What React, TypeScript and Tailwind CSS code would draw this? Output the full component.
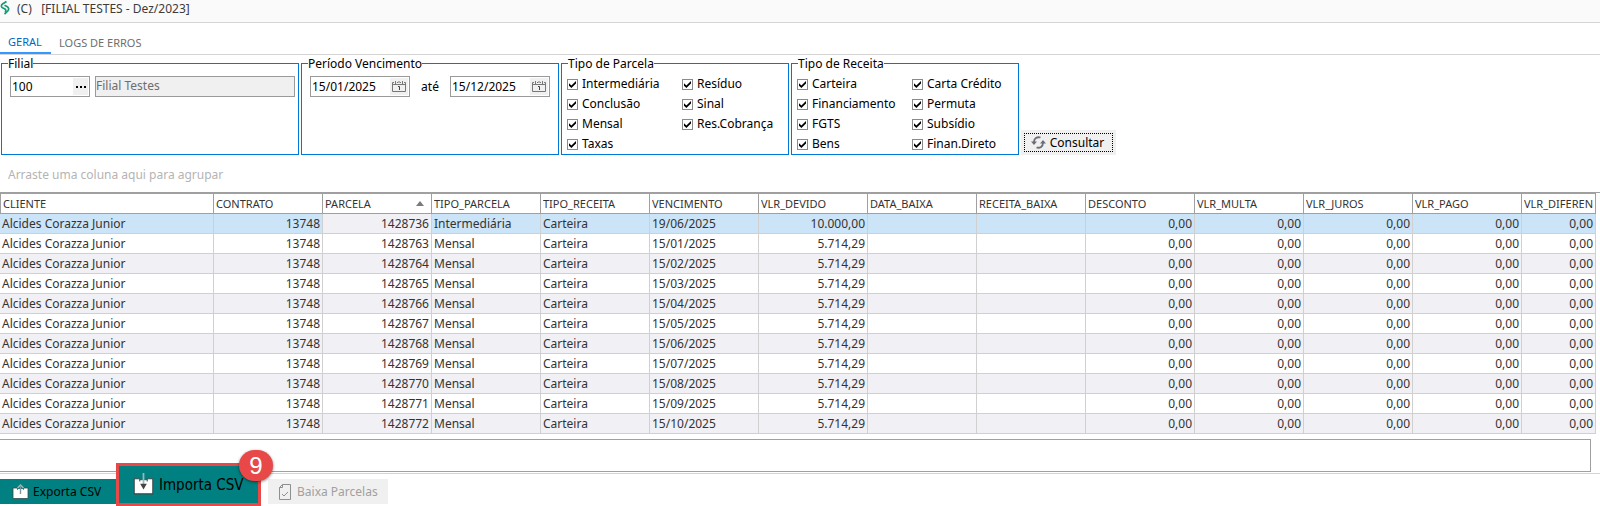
import type { ReactNode } from 'react'

const COLUMNS = [
  { name: 'CLIENTE', width: 'w-[214px]' },
  { name: 'CONTRATO', width: 'w-[109px]', right: true },
  { name: 'PARCELA', width: 'w-[109px]', right: true, sorted: true },
  { name: 'TIPO_PARCELA', width: 'w-[109px]' },
  { name: 'TIPO_RECEITA', width: 'w-[109px]' },
  { name: 'VENCIMENTO', width: 'w-[109px]' },
  { name: 'VLR_DEVIDO', width: 'w-[109px]', right: true },
  { name: 'DATA_BAIXA', width: 'w-[109px]' },
  { name: 'RECEITA_BAIXA', width: 'w-[109px]' },
  { name: 'DESCONTO', width: 'w-[109px]', right: true },
  { name: 'VLR_MULTA', width: 'w-[109px]', right: true },
  { name: 'VLR_JUROS', width: 'w-[109px]', right: true },
  { name: 'VLR_PAGO', width: 'w-[109px]', right: true },
  { name: 'VLR_DIFEREN', width: 'w-auto', right: true },
]

const PARCELAS = [
  ['1428736', 'Intermediária', '19/06/2025', '10.000,00'],
  ['1428763', 'Mensal', '15/01/2025', '5.714,29'],
  ['1428764', 'Mensal', '15/02/2025', '5.714,29'],
  ['1428765', 'Mensal', '15/03/2025', '5.714,29'],
  ['1428766', 'Mensal', '15/04/2025', '5.714,29'],
  ['1428767', 'Mensal', '15/05/2025', '5.714,29'],
  ['1428768', 'Mensal', '15/06/2025', '5.714,29'],
  ['1428769', 'Mensal', '15/07/2025', '5.714,29'],
  ['1428770', 'Mensal', '15/08/2025', '5.714,29'],
  ['1428771', 'Mensal', '15/09/2025', '5.714,29'],
  ['1428772', 'Mensal', '15/10/2025', '5.714,29'],
]

function toCells([parcela, tipo, vencimento, valor]: string[]) {
  return [
    'Alcides Corazza Junior', '13748', parcela, tipo, 'Carteira', vencimento, valor,
    '', '', '0,00', '0,00', '0,00', '0,00', '0,00',
  ]
}

function Group({ title, className, children }: { title: string; className: string; children: ReactNode }) {
  return (
    <fieldset className={`h-[99px] border border-[#0078d7] pl-2 ${className}`}>
      <legend className="-ml-0.5 h-[15px] leading-[15px]">{title}</legend>
      {children}
    </fieldset>
  )
}

function Check({ label }: { label: string }) {
  return (
    <label className="flex h-5 items-center gap-1 whitespace-nowrap">
      <span className="grid size-[11px]">
        <input
          type="checkbox"
          defaultChecked
          className="peer col-start-1 row-start-1 size-[11px] appearance-none border border-[#8a8a8a] bg-white"
        />
        <svg
          viewBox="0 0 11 11"
          className="pointer-events-none invisible col-start-1 row-start-1 size-[11px] peer-checked:visible"
          aria-hidden="true"
        >
          <path d="M2 4.2 4.4 6.6 9 2v2.6L4.4 9 2 6.8z" fill="#000" />
        </svg>
      </span>
      {label}
    </label>
  )
}

function DateField({ label, value }: { label: string; value: string }) {
  return (
    <div className="flex h-[21px] w-[100px] items-center border border-[#9a9a9a] pr-px">
      <input aria-label={label} defaultValue={value} className="w-0 flex-1 pl-px outline-none" />
      <button type="button" aria-label={`Abrir calendário: ${label}`} className="grid h-[17px] w-[18px] place-items-center bg-[#f0f0f0]">
        <svg width="14" height="13" viewBox="0 0 14 13" fill="none" stroke="#777" aria-hidden="true">
          <path d="M2 2.5H.5v9h13v-9H12M5 2.5h1M8 2.5h1M3.5 1v3M7 1v2M10.5 1v3M1 4.5h12" />
          <path d="M6 6.5h1.5v3.5" stroke="#444" />
        </svg>
      </button>
    </div>
  )
}

function BoxIcon({ down, className }: { down?: boolean; className: string }) {
  return (
    <svg viewBox="0 0 17 16" className={className} preserveAspectRatio="none" aria-hidden="true">
      <path d="M1 4h4.5v1.5h6V4H16v10.500H1z" fill="#fff" stroke="#3d4a4a" strokeWidth="0.8" />
      <path d="M5.900 5h5.200v3H5.900z" fill="#fff" />
      {down ? (
        <>
          <path d="M8.500 0v8" stroke="#a5b5b5" strokeWidth="1.4" />
          <path d="M5.800 7.500h5.400L8.500 11.500z" fill="#444" />
        </>
      ) : (
        <>
          <path d="M8.500 2.500V10" stroke="#8a9494" strokeWidth="1.4" />
          <path d="M5.500 4 8.500 1l3 3" fill="none" stroke="#a5b5b5" strokeWidth="1.4" />
        </>
      )}
    </svg>
  )
}

export default function App() {
  return (
    <div className="bg-white font-['Noto_Sans','Open_Sans',sans-serif] text-[12px] leading-4 text-black">
      {/* Title bar */}
      <header className="flex h-[23px] items-start border-b border-[#d5d5d5] bg-[#fafafa] text-[#3c3c3c]">
        <svg width="10" height="16" viewBox="0 0 10 16" fill="none" stroke="#159a76" strokeWidth="1.7" aria-hidden="true">
          <path d="M6.500 1.500 2.500 4C1 5 1 7 2.500 7.800L5 9c1.200.8 1 2 0 2.800" />
          <path d="M4.500 5.200 7 6.500c2 1 2.200 3.300.6 4.700L4.500 14" />
        </svg>
        <h1 className="ml-[7px] leading-[18px] whitespace-pre">(C)   [FILIAL TESTES - Dez/2023]</h1>
      </header>

      <nav role="tablist" className="flex h-8 items-end border-b border-[#d5d5d5] text-[11px]">
        <button type="button" role="tab" aria-selected="true" className="h-6 w-[51px] border-b-2 border-[#3399ff] pt-0.5 pr-px text-[#0068c0]">
          GERAL
        </button>
        <button type="button" role="tab" aria-selected="false" className="h-6 px-2 pt-0.5 text-[#6e6e6e]">
          LOGS DE ERROS
        </button>
      </nav>

      {/* Filters */}
      <div className="flex items-end gap-0.5 pt-px pl-px">
        <Group title="Filial" className="w-[298px]">
          <div className="flex gap-[5px] pt-[5px]">
            <div className="flex h-[21px] w-20 items-center border border-[#9a9a9a] pr-px">
              <input aria-label="Filial" defaultValue="100" className="w-0 flex-1 pl-px outline-none" />
              <button type="button" aria-label="Procurar filial" className="flex h-[17px] w-[15px] items-center justify-center gap-0.5 bg-[#f0f0f0]">
                <i className="size-0.5 bg-black" />
                <i className="size-0.5 bg-black" />
                <i className="size-0.5 bg-black" />
              </button>
            </div>
            <input
              aria-label="Nome da filial"
              readOnly
              value="Filial Testes"
              className="h-[21px] w-[200px] border border-[#9a9a9a] bg-[#f0f0f0] pb-0.5 text-[#6d6d6d] outline-none"
            />
          </div>
        </Group>

        <Group title="Período Vencimento" className="w-[258px]">
          <div className="flex items-center pt-[5px]">
            <DateField label="Vencimento inicial" value="15/01/2025" />
            <span className="w-10 text-center">até</span>
            <DateField label="Vencimento final" value="15/12/2025" />
          </div>
        </Group>

        <Group title="Tipo de Parcela" className="w-[228px]">
          <div className="-ml-[3px] grid grid-flow-col grid-cols-[115px_1fr] grid-rows-4 pt-[3px]">
            {['Intermediária', 'Conclusão', 'Mensal', 'Taxas', 'Resíduo', 'Sinal', 'Res.Cobrança'].map((t) => (
              <Check key={t} label={t} />
            ))}
          </div>
        </Group>

        <Group title="Tipo de Receita" className="w-[228px]">
          <div className="-ml-[3px] grid grid-flow-col grid-cols-[115px_1fr] grid-rows-4 pt-[3px]">
            {['Carteira', 'Financiamento', 'FGTS', 'Bens', 'Carta Crédito', 'Permuta', 'Subsídio', 'Finan.Direto'].map((t) => (
              <Check key={t} label={t} />
            ))}
          </div>
        </Group>

        <button type="button" className="h-[25px] w-[95px] bg-[#f0f0f0] p-[3px]">
          <span className="flex h-full items-center justify-center gap-1 border border-dotted border-black pr-0.5">
            <svg width="15" height="13" viewBox="0 0 15 13" fill="none" stroke="#6d6d78" strokeWidth="1.8" aria-hidden="true">
              <path d="M9.500 1.500C6 .5 3 2.500 3 6M5.500 11.500C9 12.500 12 10.500 12 7" />
              <path d="M0 5.500h6L3 9zM9 7.500h6L12 4z" fill="#6d6d78" stroke="none" />
            </svg>
            Consultar
          </span>
        </button>
      </div>

      <p className="h-[37px] pt-3 pl-2 text-[#b4b4b4]">Arraste uma coluna aqui para agrupar</p>

      {/* Grid */}
      <div className="border-t border-[#a0a0a0] pr-1">
        <table className="w-full table-fixed border-separate border-spacing-0 text-[#333]">
          <thead>
            <tr className="text-[11px]">
              {COLUMNS.map((c) => (
                <th
                  key={c.name}
                  scope="col"
                  className={`h-[21px] border-t border-r border-b border-[#a0a0a0] p-0 pl-0.5 text-left font-normal first:border-l ${c.width}`}
                >
                  <div className="flex items-center justify-between overflow-hidden pr-[7px]">
                    {c.name}
                    {c.sorted && <i className="border-x-4 border-b-[5px] border-x-transparent border-b-[#7a7a7a]" />}
                  </div>
                </th>
              ))}
            </tr>
          </thead>
          <tbody>
            {PARCELAS.map((p, row) => (
              <tr key={p[0]} className={row === 0 ? 'bg-[#cce4f7]' : row % 2 === 0 ? 'bg-[#f0f0f5]' : 'bg-white'}>
                {toCells(p).map((cell, i) => (
                  <td
                    key={COLUMNS[i].name}
                    className={`h-5 border-r border-b border-[#d0d0d0] p-0 px-0.5 ${COLUMNS[i].right ? 'text-right' : ''} ${row === 0 && i === 2 ? 'bg-[#f0f0f5]' : ''}`}
                  >
                    {cell}
                  </td>
                ))}
              </tr>
            ))}
          </tbody>
        </table>
      </div>

      <div className="mt-[5px] mr-[9px] h-[33px] border-y border-r border-[#a0a0a0]" />

      {/* Actions */}
      <footer className="mt-px flex border-t border-[#d5d5d5] pt-[5px] pb-0.5">
        <button type="button" className="flex h-[25px] w-[116px] items-center gap-1 bg-[#008080] pl-3">
          <BoxIcon className="h-4 w-[17px]" />
          Exporta CSV
        </button>
        <div className="relative mr-[7px] w-[145px]">
          <button
            type="button"
            className="absolute -bottom-0.5 left-0 flex h-[43px] w-full items-center gap-[5px] border-3 border-[#e84848] bg-[#008080] pl-[14px] font-['DejaVu_Sans_Condensed','DejaVu_Sans',sans-serif] text-[15px]"
          >
            <BoxIcon down className="h-[23px] w-[21px]" />
            Importa CSV
          </button>
          <span className="absolute right-[-12px] bottom-[23px] grid h-[31px] w-[34px] place-items-center rounded-full bg-[#e84848] font-['Liberation_Sans',Arial,sans-serif] text-[24px] text-white shadow-[0_1px_3px_rgba(0,0,0,0.5)]">
            9
          </span>
        </div>
        <button type="button" disabled className="flex h-[25px] w-[120px] items-center gap-[6px] bg-[#f0f0f0] pl-[11px] text-[#a0a0a0]">
          <svg width="12" height="16" viewBox="0 0 12 16" fill="none" stroke="#8f8f8f" aria-hidden="true">
            <path d="M3.500 .5h8v15H.5v-12zM.5 3.500h3v-3M3 10l2 2 4-4" />
          </svg>
          Baixa Parcelas
        </button>
      </footer>
    </div>
  )
}
